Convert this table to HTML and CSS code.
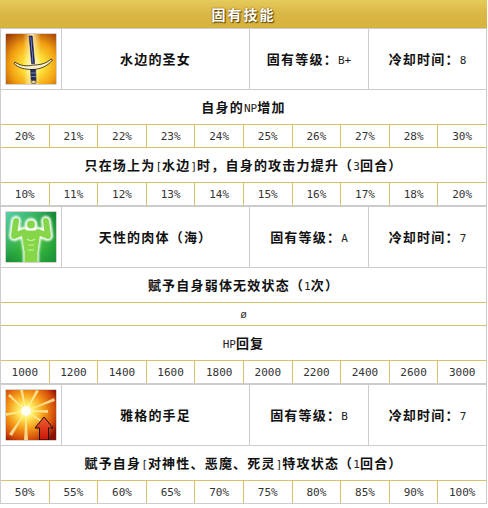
FILE: index.html
```html
<!DOCTYPE html>
<html lang="zh">
<head>
<meta charset="utf-8">
<title>固有技能</title>
<link rel="stylesheet" href="styles.css">
</head>
<body>
<div class="panel">
  <div class="title">固有技能</div>

  <section class="skill">
    <div class="head">
      <div class="icon-cell">
        <svg class="icon" viewBox="0 0 50 50" width="50" height="50">
          <defs>
            <radialGradient id="sw" cx="0.55" cy="0.62" r="0.78">
              <stop offset="0" stop-color="#fffbd8"/>
              <stop offset="0.25" stop-color="#ffe238"/>
              <stop offset="0.6" stop-color="#f2a012"/>
              <stop offset="1" stop-color="#a03c06"/>
            </radialGradient>
            <linearGradient id="beam" x1="0" y1="0" x2="1" y2="0">
              <stop offset="0" stop-color="#fff6b0" stop-opacity="0"/>
              <stop offset="0.5" stop-color="#fff8c8" stop-opacity="0.85"/>
              <stop offset="1" stop-color="#fff6b0" stop-opacity="0"/>
            </linearGradient>
          </defs>
          <rect width="50" height="50" fill="url(#sw)"/>
          <path d="M17 0 L35 0 L33 50 L19 50 Z" fill="url(#beam)"/>
          <path d="M23.2 2 L26.2 2 L28.6 29.5 L25.6 29.5 Z" fill="#1a2670" stroke="#0c1240" stroke-width="0.6"/>
          <path d="M24.5 3 L25 3 L27.3 29 L26.8 29 Z" fill="#b8c8f0"/>
          <path d="M27 31 C21 32.5 14 32 9 28 L8 29.5 C12 34 19 35.5 26 35.5 C33 35.5 41 33 46.5 26 L45 25 C40 30 33 31 27 31 Z" fill="#f6efcc" stroke="#3a2c12" stroke-width="0.9"/>
          <path d="M24.6 35.5 L29.6 35.5 L30 46.5 L25.2 46.5 Z" fill="#26305a" stroke="#101428" stroke-width="0.6"/>
          <path d="M25 39 L29.8 39 M25.2 42.5 L30 42.5" stroke="#8e98c0" stroke-width="0.8"/>
          <ellipse cx="27.6" cy="48" rx="2.8" ry="1.7" fill="#d8ccaa" stroke="#3a2c12" stroke-width="0.6"/>
        </svg>
      </div>
      <div class="cell">水边的圣女</div>
      <div class="cell">固有等级：<span class="lat">B+</span></div>
      <div class="cell">冷却时间：<span class="lat">8</span></div>
    </div>
    <div class="effect">自身的<span class="lat">NP</span>增加</div>
    <div class="values">
      <span>20%</span><span>21%</span><span>22%</span><span>23%</span><span>24%</span>
      <span>25%</span><span>26%</span><span>27%</span><span>28%</span><span>30%</span>
    </div>
    <div class="effect">只在场上为<span class="lat">[</span>水边<span class="lat">]</span>时，自身的攻击力提升（<span class="lat">3</span>回合）</div>
    <div class="values">
      <span>10%</span><span>11%</span><span>12%</span><span>13%</span><span>14%</span>
      <span>15%</span><span>16%</span><span>17%</span><span>18%</span><span>20%</span>
    </div>
  </section>

  <section class="skill">
    <div class="head">
      <div class="icon-cell">
        <svg class="icon" viewBox="0 0 50 50" width="50" height="50">
          <defs>
            <radialGradient id="gr" cx="0.5" cy="0.55" r="0.75">
              <stop offset="0" stop-color="#5ccf44"/>
              <stop offset="0.55" stop-color="#2aa83a"/>
              <stop offset="1" stop-color="#128338"/>
            </radialGradient>
            <linearGradient id="teal" x1="0" y1="0" x2="1" y2="1">
              <stop offset="0" stop-color="#66e0c0" stop-opacity="0.85"/>
              <stop offset="0.5" stop-color="#66e0c0" stop-opacity="0"/>
            </linearGradient>
            <filter id="glow" x="-20%" y="-20%" width="140%" height="140%">
              <feGaussianBlur stdDeviation="1.3"/>
            </filter>
          </defs>
          <rect width="50" height="50" fill="url(#gr)"/>
          <rect width="50" height="50" fill="url(#teal)"/>
          <g fill="#ffffff" stroke="#ffffff" stroke-linejoin="round" stroke-linecap="round" filter="url(#glow)">
            <path d="M18 20 L8 24 L10 9 M32 20 L42 24 L40 9" fill="none" stroke-width="10"/>
            <path d="M16 19 L34 19 L31 40 L31 50 L19 50 L19 40 Z" stroke-width="4"/>
            <circle cx="25" cy="12.5" r="5.5" stroke-width="2"/>
          </g>
          <g fill="#86d64a" stroke="#86d64a" stroke-linejoin="round" stroke-linecap="round">
            <path d="M18 20 L8 24 L10 9 M32 20 L42 24 L40 9" fill="none" stroke-width="6"/>
            <path d="M16 19 L34 19 L31 40 L31 50 L19 50 L19 40 Z" stroke-width="1"/>
            <circle cx="25" cy="12.5" r="4" stroke-width="0"/>
          </g>
          <path d="M21 27 C23 29 27 29 29 27 M22 33 L28 33 M22 38 L28 38" fill="none" stroke="#c8f49c" stroke-width="1.1"/>
        </svg>
      </div>
      <div class="cell">天性的肉体（海）</div>
      <div class="cell">固有等级：<span class="lat">A</span></div>
      <div class="cell">冷却时间：<span class="lat">7</span></div>
    </div>
    <div class="effect">赋予自身弱体无效状态（<span class="lat">1</span>次）</div>
    <div class="values single"><span>ø</span></div>
    <div class="effect"><span class="lat">HP</span>回复</div>
    <div class="values">
      <span>1000</span><span>1200</span><span>1400</span><span>1600</span><span>1800</span>
      <span>2000</span><span>2200</span><span>2400</span><span>2600</span><span>3000</span>
    </div>
  </section>

  <section class="skill">
    <div class="head">
      <div class="icon-cell">
        <svg class="icon" viewBox="0 0 50 50" width="50" height="50">
          <defs>
            <radialGradient id="ex" cx="0.4" cy="0.42" r="0.72">
              <stop offset="0" stop-color="#fffff0"/>
              <stop offset="0.22" stop-color="#ffe85a"/>
              <stop offset="0.5" stop-color="#f59a18"/>
              <stop offset="0.8" stop-color="#d24a0a"/>
              <stop offset="1" stop-color="#8a1004"/>
            </radialGradient>
            <linearGradient id="ar" x1="0" y1="0" x2="0" y2="1">
              <stop offset="0" stop-color="#f06030"/>
              <stop offset="1" stop-color="#c81408"/>
            </linearGradient>
          </defs>
          <rect width="50" height="50" fill="url(#ex)"/>
          <g fill="#fff7b0" opacity="0.75">
            <path d="M20 21 L2 6 L4 4 Z"/>
            <path d="M20 21 L14 0 L17 0 Z"/>
            <path d="M20 21 L30 0 L33 1 Z"/>
            <path d="M20 21 L48 8 L49 11 Z"/>
            <path d="M20 21 L0 26 L0 23 Z"/>
            <path d="M20 21 L6 46 L3 44 Z"/>
            <path d="M20 21 L22 50 L18 50 Z"/>
            <path d="M20 21 L46 36 L44 39 Z"/>
            <path d="M20 21 L42 20 L42 23 Z"/>
          </g>
          <circle cx="20" cy="21" r="5" fill="#ffffff" opacity="0.8"/>
          <path d="M38 27 L47 38 L42.5 38 L42.5 50 L33.5 50 L33.5 38 L29 38 Z" fill="url(#ar)" stroke="#1a0a04" stroke-width="1"/>
        </svg>
      </div>
      <div class="cell">雅格的手足</div>
      <div class="cell">固有等级：<span class="lat">B</span></div>
      <div class="cell">冷却时间：<span class="lat">7</span></div>
    </div>
    <div class="effect">赋予自身<span class="lat">[</span>对神性、恶魔、死灵<span class="lat">]</span>特攻状态（<span class="lat">1</span>回合）</div>
    <div class="values">
      <span>50%</span><span>55%</span><span>60%</span><span>65%</span><span>70%</span>
      <span>75%</span><span>80%</span><span>85%</span><span>90%</span><span>100%</span>
    </div>
  </section>
</div>
</body>
</html>
```

FILE: styles.css
```css
body {
  margin: 0;
  background: #ffffff;
  font-family: "Noto Sans CJK SC", "Noto Sans", sans-serif;
  color: #111111;
}

.panel {
  width: 487px;
}

.title {
  height: 28px;
  line-height: 28px;
  text-align: center;
  background: linear-gradient(#e6ca5c, #dbb846 45%, #d6b23e);
  color: #ffffff;
  font-size: 14px;
  font-weight: 700;
  letter-spacing: 2px;
  text-shadow: 1px 1px 1px #5a4204, 0 0 2px #7a5a10;
}

.skill {
  border: 1px solid #cccccc;
}

.head {
  display: grid;
  grid-template-columns: 60px 187px 118px 117px;
  grid-template-rows: 60px;
  gap: 1px;
  background: #cccccc;
  border-bottom: 1px solid #cccccc;
}

.icon-cell {
  background: #ffffff;
  display: flex;
  align-items: center;
  justify-content: center;
}

.cell {
  background: #ffffff;
  text-align: center;
  line-height: 60px;
  white-space: nowrap;
}

.icon {
  display: block;
  box-shadow: 0 0 0 0.5px rgba(60, 30, 0, 0.4);
}

.cell,
.effect {
  font-size: 13px;
  font-weight: 700;
  letter-spacing: 1.2px;
}

.lat {
  font-family: "DejaVu Sans Mono", monospace;
  font-size: 11px;
  font-weight: 400;
  letter-spacing: 0;
  color: #222222;
}

.effect {
  height: 34px;
  line-height: 34px;
  text-align: center;
  white-space: nowrap;
  border-bottom: 1px solid #d7c068;
}

.values {
  display: grid;
  grid-template-columns: repeat(10, 1fr);
  grid-template-rows: 22px;
  gap: 1px;
  background: #d7c068;
  border-bottom: 1px solid #d7c068;
}

.values:last-child {
  border-bottom: none;
}

.values.single {
  grid-template-columns: 1fr;
}

.values span {
  background: #ffffff;
  display: flex;
  align-items: center;
  justify-content: center;
  font-family: "DejaVu Sans Mono", monospace;
  font-size: 11px;
  color: #333333;
}
```
